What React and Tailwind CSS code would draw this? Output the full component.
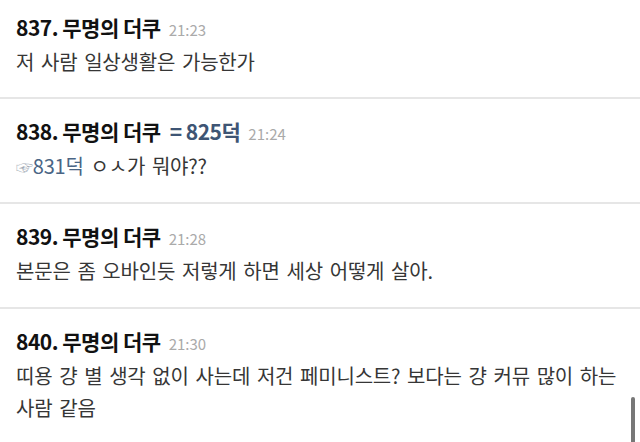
import React from 'react';

const posts = [
  { no: 837, time: '21:23', lines: ['저 사람 일상생활은 가능한가'], first: true },
  { no: 838, time: '21:24', ref: '825덕', quote: '831덕', lines: ['ㅇㅅ가 뭐야??'] },
  { no: 839, time: '21:28', lines: ['본문은 좀 오바인듯 저렇게 하면 세상 어떻게 살아.'] },
  {
    no: 840,
    time: '21:30',
    lines: ['띠용 걍 별 생각 없이 사는데 저건 페미니스트? 보다는 걍 커뮤 많이 하는', '사람 같음'],
  },
];

const font = { fontFamily: '"Noto Sans CJK KR", "Noto Sans", sans-serif' };

const Post = ({ post }) => (
  <div className={`border-b-2 border-[#e6e6e6] px-4 ${post.first ? 'pt-[13px] pb-[19px]' : 'pt-[18px] pb-[20px]'}`}>
    {/* header: number + nickname, optional reply target, time */}
    <div className="whitespace-nowrap text-[21px] leading-[28px]">
      <span className="font-bold tracking-[-0.5px] text-[#111]">{post.no}. 무명의 더쿠</span>
      {post.ref && (
        <span className="ml-[9px] font-bold tracking-[-0.5px] text-[#3e5574]">= {post.ref}</span>
      )}
      <span className="ml-2 text-[15px] leading-none text-[#aaaaaa]">{post.time}</span>
    </div>
    <div className="mt-[5px] text-[20px] leading-[32px] tracking-[-0.2px] [word-spacing:2.5px] text-[#363636]">
      {post.lines.map((line, i) => (
        <div key={i} className="whitespace-nowrap">
          {post.quote && i === 0 && (
            <>
              <span className="text-[17px] leading-none text-[#a3abb6]">☞</span>
              <span className="text-[#4a6585]">{post.quote}</span>{' '}
            </>
          )}
          {line}
        </div>
      ))}
    </div>
  </div>
);

export default function App() {
  return (
    <div className="relative h-[442px] w-[640px] overflow-hidden bg-white" style={font}>
      {posts.map((p) => (
        <Post key={p.no} post={p} />
      ))}
      {/* scrollbar thumb */}
      <div className="absolute right-[5px] top-[397px] h-[60px] w-[4px] rounded-full bg-[#777]" />
    </div>
  );
}
